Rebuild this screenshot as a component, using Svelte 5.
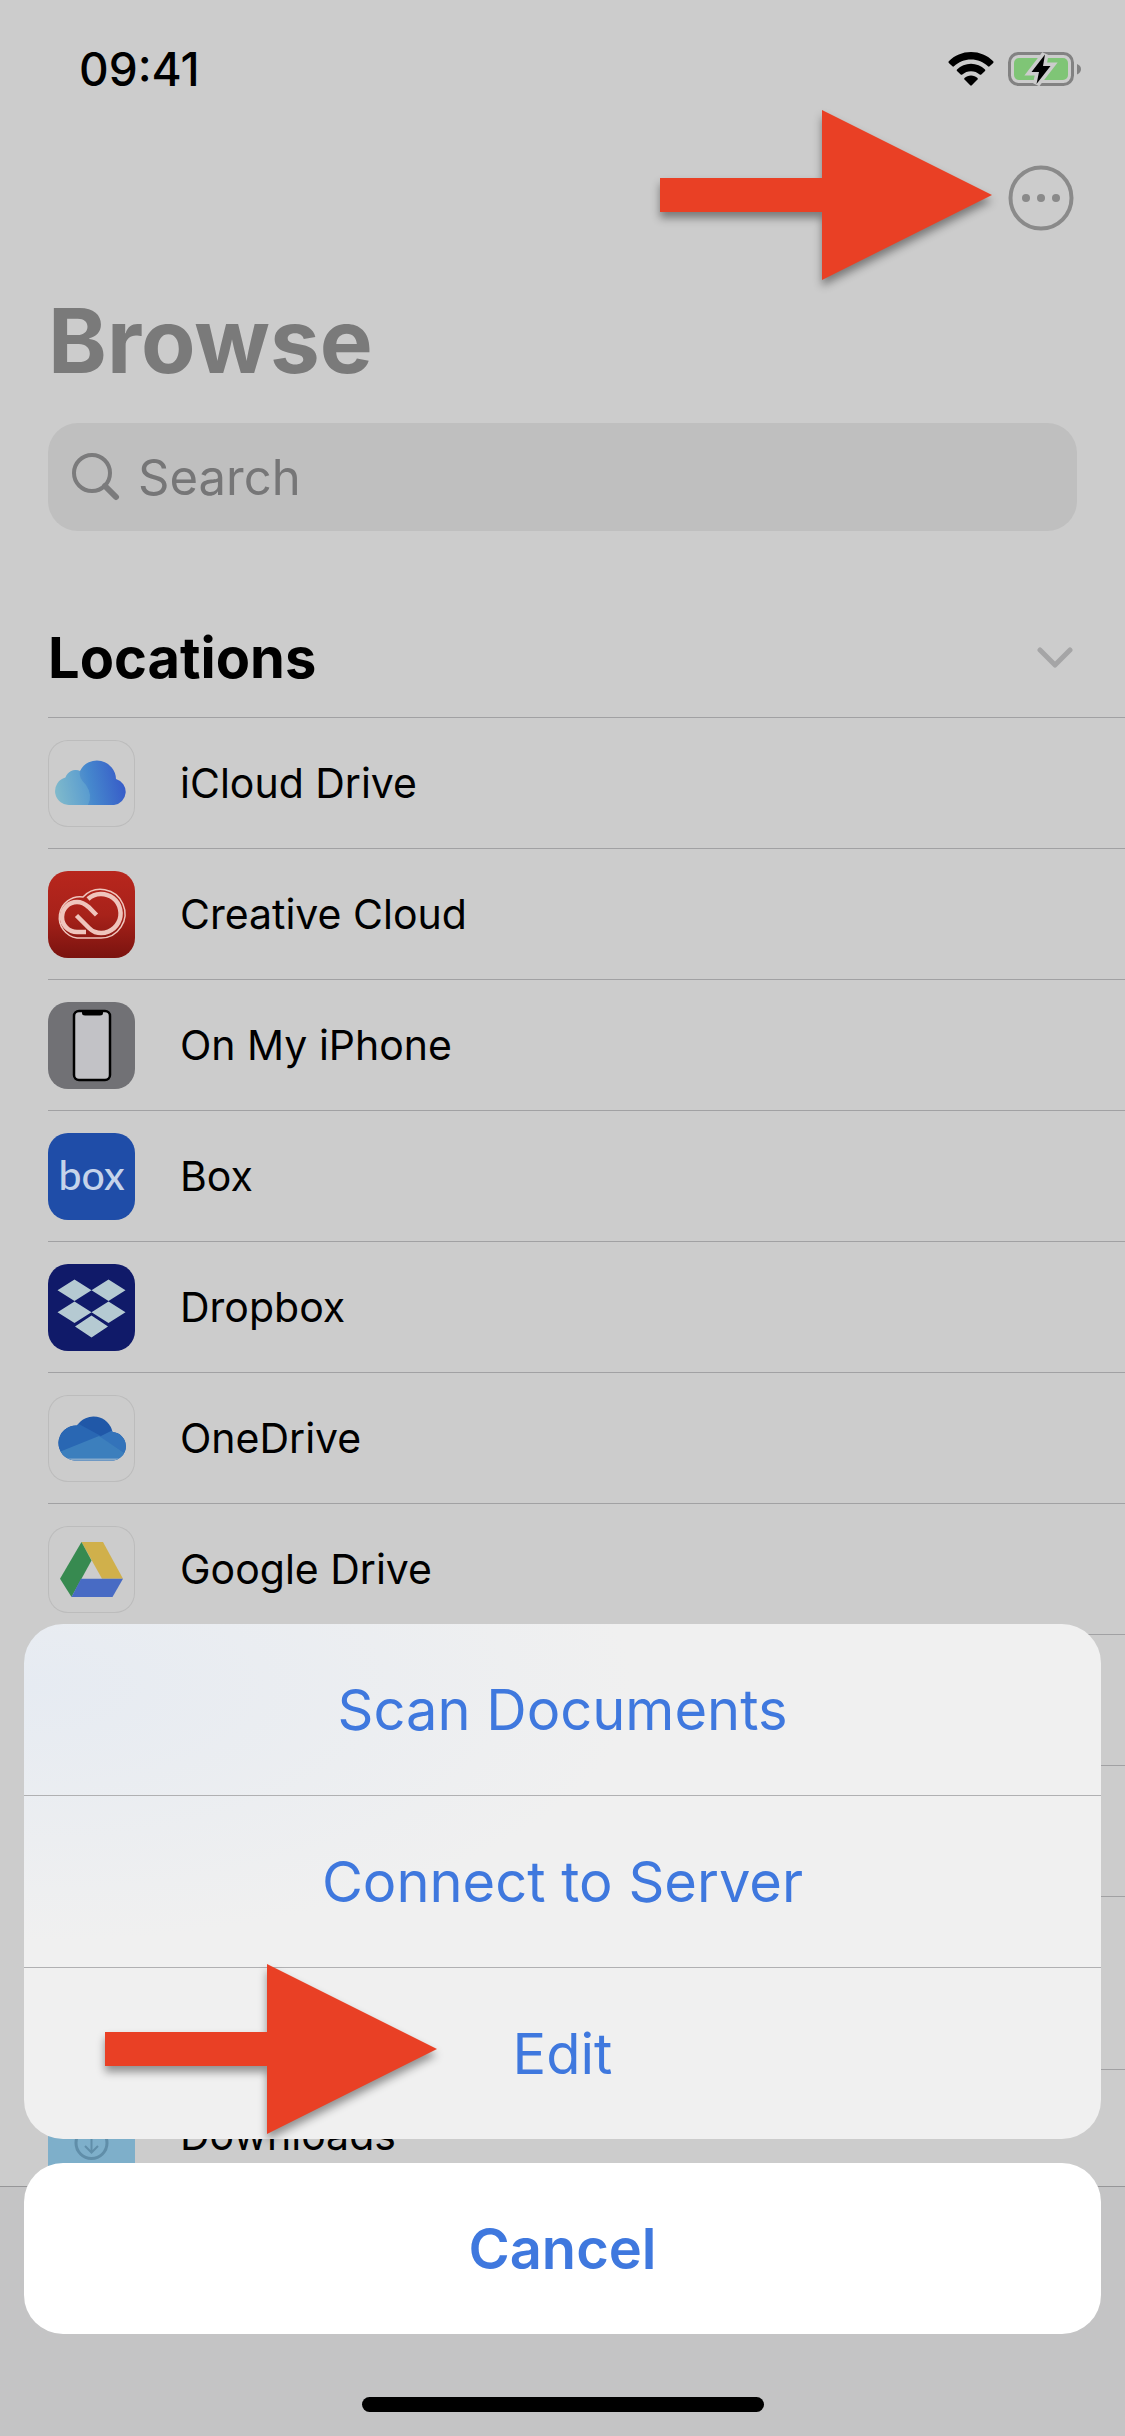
<script>
  const locations = [
    { name: 'iCloud Drive', icon: 'icloud' },
    { name: 'Creative Cloud', icon: 'creative' },
    { name: 'On My iPhone', icon: 'iphone' },
    { name: 'Box', icon: 'box' },
    { name: 'Dropbox', icon: 'dropbox' },
    { name: 'OneDrive', icon: 'onedrive' },
    { name: 'Google Drive', icon: 'gdrive' },
  ];

  const actions = ['Scan Documents', 'Connect to Server', 'Edit'];

  let query = '';
</script>

{#snippet arrow()}
  <svg viewBox="0 0 332 170" width="332" height="170" aria-hidden="true">
    <path d="M0 68H162V0L332 85L162 170V102H0Z" fill="#e94025" />
  </svg>
{/snippet}

<div class="screen">
  <div class="status-bar">
    <span class="time">09:41</span>
    <div class="status-icons">
      <svg width="46" height="34" viewBox="0 0 46 34" aria-hidden="true">
        <path d="M23 0C31.500 0 39.500 3.400 45.200 9.200Q46 10 45.200 10.900L41.600 14.300Q40.800 15 40 14.300C35.500 9.900 29.500 7.400 23 7.400S10.500 9.900 6 14.300Q5.200 15 4.400 14.300L.8 10.900Q0 10 .8 9.200C6.500 3.400 14.500 0 23 0Z" />
        <path d="M23 11.800C28.300 11.800 33.200 13.900 37 17.400Q37.700 18.200 37 19L33.300 22.500Q32.500 23.200 31.700 22.500C29.300 20.400 26.300 19.200 23 19.200S16.700 20.400 14.300 22.500Q13.500 23.200 12.700 22.500L9 19Q8.300 18.200 9 17.400C12.800 13.900 17.700 11.800 23 11.800Z" />
        <path d="M23 23.600C25.500 23.600 27.800 24.500 29.500 26Q30.200 26.700 29.500 27.500L23.800 33.300Q23 34 22.200 33.300L16.500 27.500Q15.800 26.700 16.500 26C18.200 24.500 20.500 23.600 23 23.600Z" />
      </svg>
      <svg width="74" height="38" viewBox="0 0 74 38" aria-hidden="true">
        <rect x="1.500" y="3.500" width="63" height="31" rx="9" fill="none" stroke="#828282" stroke-width="3" />
        <rect x="6" y="8" width="54" height="22" rx="5" fill="#7fc576" />
        <path d="M69 14Q73 15.500 73 19T69 24.500Z" fill="#828282" />
        <path d="M37 4.500L23.500 22H31L28.500 34L42.500 16H35Z" fill="#000" stroke="#ccc" stroke-width="7" paint-order="stroke" />
      </svg>
    </div>
  </div>

  <div class="nav-bar">
    <button class="more" aria-label="More">
      <svg width="66" height="66" viewBox="0 0 66 66" aria-hidden="true">
        <circle cx="33" cy="33" r="30.500" fill="none" stroke="#8a8a8a" stroke-width="4" />
        <g fill="#8a8a8a">
          <circle cx="18" cy="33" r="4" />
          <circle cx="33" cy="33" r="4" />
          <circle cx="48" cy="33" r="4" />
        </g>
      </svg>
    </button>
    <div class="pointer pointer-more">{@render arrow()}</div>
  </div>

  <h1>Browse</h1>

  <label class="search">
    <svg width="48" height="48" viewBox="0 0 48 48" fill="none" stroke="#7b7b7c" aria-hidden="true">
      <circle cx="20" cy="20" r="18" stroke-width="4" />
      <path d="M33 33L44 44" stroke-width="6" stroke-linecap="round" />
    </svg>
    <input type="search" placeholder="Search" aria-label="Search" bind:value={query} />
  </label>

  <section>
    <div class="section-head">
      <h2>Locations</h2>
      <button class="collapse" aria-label="Collapse Locations">
        <svg width="36" height="22" viewBox="0 0 36 22" aria-hidden="true">
          <path d="M3 3L18 18L33 3" fill="none" stroke="#a5a5a6" stroke-width="5" stroke-linecap="round" stroke-linejoin="round" />
        </svg>
      </button>
    </div>

    <ul>
      {#each locations as location}
        <li>
          <div class="tile {location.icon}">
            <svg viewBox="0 0 87 87" width="87" height="87" aria-hidden="true">
              {#if location.icon === 'icloud'}
                <defs>
                  <linearGradient id="icloud-fill" x1="8" y1="60" x2="79" y2="45" gradientUnits="userSpaceOnUse">
                    <stop offset="0" stop-color="#7db4c8" />
                    <stop offset=".5" stop-color="#4688cd" />
                    <stop offset="1" stop-color="#3659c8" />
                  </linearGradient>
                </defs>
                <path d="M22 65A14 14 0 0 1 17.500 37.500A10.500 10.500 0 0 1 32 31A19 19 0 0 1 68 39A13.300 13.300 0 0 1 66 65Z" fill="url(#icloud-fill)" />
                <path d="M22 65A14 14 0 0 1 17.500 37.500A10.500 10.500 0 0 1 32 31Q30 37 38 45Q45 55 40 65Z" fill="#8ccfd8" opacity=".25" />
              {:else if location.icon === 'creative'}
                <g fill="none" stroke="#efc5bd">
                  <path d="M29 67A20.500 20.500 0 1 1 35 26A24.300 24.300 0 1 1 53 67Z" stroke-width="1.500" />
                  <g stroke-width="4.500">
                    <path d="M40 28A19.500 19.500 0 1 1 47 61Q44 60 41 57L28.500 44.500" />
                    <path d="M48.500 44L40.500 36Q35 31 29 31A15 15 0 0 0 29 61H38" />
                  </g>
                </g>
              {:else if location.icon === 'iphone'}
                <rect x="26" y="9" width="36" height="69" rx="5" fill="#c2c2c6" stroke="#000" stroke-width="2.500" />
                <path d="M34 9H55V11Q55 13.500 52 13.500H37Q34 13.500 34 11Z" />
              {:else if location.icon === 'box'}
                <text x="43.500" y="57" text-anchor="middle">box</text>
              {:else if location.icon === 'dropbox'}
                <path d="M26.500 15.500L43.500 26.300L26.500 37L9.500 26.300ZM60.500 15.500L77.500 26.300L60.500 37L43.500 26.300ZM26.500 37.500L43.500 48.300L26.500 59L9.500 48.300ZM60.500 37.500L77.500 48.300L60.500 59L43.500 48.300ZM43.500 51.500L60 62.500L43.500 73.500L27 62.500Z" fill="#b5cad2" />
              {:else if location.icon === 'onedrive'}
                <clipPath id="onedrive-cloud">
                  <path d="M26 65.500A17.500 17.500 0 0 1 28 30.500A19.500 19.500 0 0 1 63.500 37A14.300 14.300 0 0 1 64 65.500Z" />
                </clipPath>
                <g clip-path="url(#onedrive-cloud)" transform="translate(1 0)">
                  <rect width="87" height="87" fill="#2058a8" />
                  <path d="M8 28H28L52 41L8 66Z" fill="#2967b3" />
                  <path d="M50 42L64 35H82V62Z" fill="#3373ba" />
                  <path d="M8 58L50 41L80 61V70H8Z" fill="#3c7fbd" />
                  <path d="M8 63.500H80V67H8Z" fill="#86aacb" />
                </g>
              {:else}
                <path d="M33.500 16H55L75 52.700H54Z" fill="#d0b04b" />
                <path d="M33.500 16L43.500 34.500L23.500 71L12 52.700Z" fill="#378a50" />
                <path d="M33 52.700H75L64.500 71H23.500Z" fill="#486bc4" />
              {/if}
            </svg>
          </div>
          <span>{location.name}</span>
        </li>
      {/each}
      <li class="covered"></li>
      <li class="covered"></li>
      <li class="covered tall"></li>
      <li>
        <div class="tile folder">
          <svg viewBox="0 0 87 87" width="87" height="87" fill="none" stroke="#608ea9" stroke-width="3" aria-hidden="true">
            <circle cx="43.500" cy="51" r="15.500" />
            <path d="M43.500 41V60M37 54L43.500 60.500L50 54" stroke-width="2" />
          </svg>
        </div>
        <span>Downloads</span>
      </li>
    </ul>
  </section>

  <div class="tab-bar"></div>

  <div class="overlay">
    <div class="sheet" role="dialog" aria-label="Browse actions">
      {#each actions as action}
        <button>{action}</button>
      {/each}
      <div class="pointer pointer-edit">{@render arrow()}</div>
    </div>
    <button class="cancel">Cancel</button>
    <div class="home-indicator"></div>
  </div>
</div>

<style>
  :global(body) {
    margin: 0;
    background: #ccc;
  }

  .screen {
    position: relative;
    min-height: 100vh;
    overflow: hidden;
    box-sizing: border-box;
    background: #ccc;
    color: #000;
    font-family: Inter, "Liberation Sans", sans-serif;
  }

  button {
    padding: 0;
    border: 0;
    background: none;
    font: inherit;
    cursor: pointer;
  }

  svg {
    display: block;
  }

  .status-bar {
    display: flex;
    align-items: center;
    justify-content: space-between;
    height: 138px;
    padding: 0 43px 0 79px;
  }

  .time {
    font-size: 46px;
    font-weight: 500;
  }

  .status-icons {
    display: flex;
    align-items: center;
    gap: 14px;
  }

  .nav-bar {
    position: relative;
    display: flex;
    justify-content: flex-end;
    align-items: center;
    height: 120px;
    padding: 0 51px;
  }

  .pointer {
    position: absolute;
    filter: drop-shadow(0 6px 4px rgba(0, 0, 0, 0.4));
    pointer-events: none;
  }

  .pointer-more {
    top: -28px;
    right: 133px;
  }

  h1 {
    margin: 0 48px;
    padding: 28px 0 27px;
    color: #7a7a7a;
    font-size: 89px;
    font-weight: 700;
    line-height: 110px;
  }

  .search {
    display: flex;
    align-items: center;
    gap: 18px;
    height: 108px;
    margin: 0 48px;
    padding: 0 24px;
    box-sizing: border-box;
    border-radius: 30px;
    background: #bfbfbf;
  }

  .search input {
    flex: 1;
    min-width: 0;
    padding: 0;
    border: 0;
    outline: 0;
    background: none;
    font: inherit;
    font-size: 49px;
    appearance: none;
  }

  .search input::placeholder {
    color: #767677;
    opacity: 1;
  }

  .section-head {
    display: flex;
    align-items: center;
    justify-content: space-between;
    height: 118px;
    margin-left: 48px;
    padding: 68px 52px 0 0;
  }

  h2 {
    margin: 0;
    font-size: 56px;
    font-weight: 700;
    line-height: 68px;
  }

  ul {
    margin: 0;
    padding: 0 0 0 48px;
    list-style: none;
  }

  li {
    display: flex;
    align-items: center;
    gap: 45px;
    height: 131px;
    box-sizing: border-box;
    border-top: 1px solid #a1a1a3;
    font-size: 41px;
  }

  .tall {
    height: 173px;
  }

  .tile {
    box-sizing: border-box;
    width: 87px;
    height: 87px;
    border-radius: 20px;
    overflow: hidden;
  }

  .icloud,
  .onedrive,
  .gdrive {
    box-shadow: inset 0 0 0 1px #bcbcbc;
  }

  .creative {
    background: linear-gradient(#b8261d, #a8221a 50%, #7a130f);
  }

  .iphone {
    background: #717175;
  }

  .box {
    background: #1f4da8;
  }

  .box text {
    fill: #c5d3ea;
    font-family: Lato, sans-serif;
    font-size: 41px;
    font-weight: 500;
  }

  .dropbox {
    background: #101a69;
  }

  .folder {
    border-radius: 0;
    background: #7eafca;
  }

  .tab-bar {
    position: absolute;
    right: 0;
    bottom: 0;
    left: 0;
    height: 249px;
    border-top: 1px solid #969698;
    background: #c4c4c5;
  }

  .overlay {
    position: absolute;
    right: 24px;
    bottom: 24px;
    left: 24px;
    display: flex;
    flex-direction: column;
    gap: 24px;
  }

  .sheet {
    position: relative;
    display: flex;
    flex-direction: column;
    border-radius: 39px;
    background:
      radial-gradient(ellipse at 0 12%, #e6ebf2, rgba(230, 235, 242, 0) 40%),
      #f0f0f0;
  }

  .sheet button,
  .cancel {
    height: 171px;
    color: #3f78de;
    font-size: 56px;
  }

  .sheet button + button {
    height: 172px;
    border-top: 1px solid #b0b0b2;
  }

  .pointer-edit {
    bottom: 5px;
    left: 81px;
  }

  .cancel {
    border-radius: 39px;
    background: #fff;
    font-weight: 600;
  }

  .home-indicator {
    align-self: center;
    width: 402px;
    height: 15px;
    margin-top: 39px;
    border-radius: 8px;
    background: #000;
  }
</style>
